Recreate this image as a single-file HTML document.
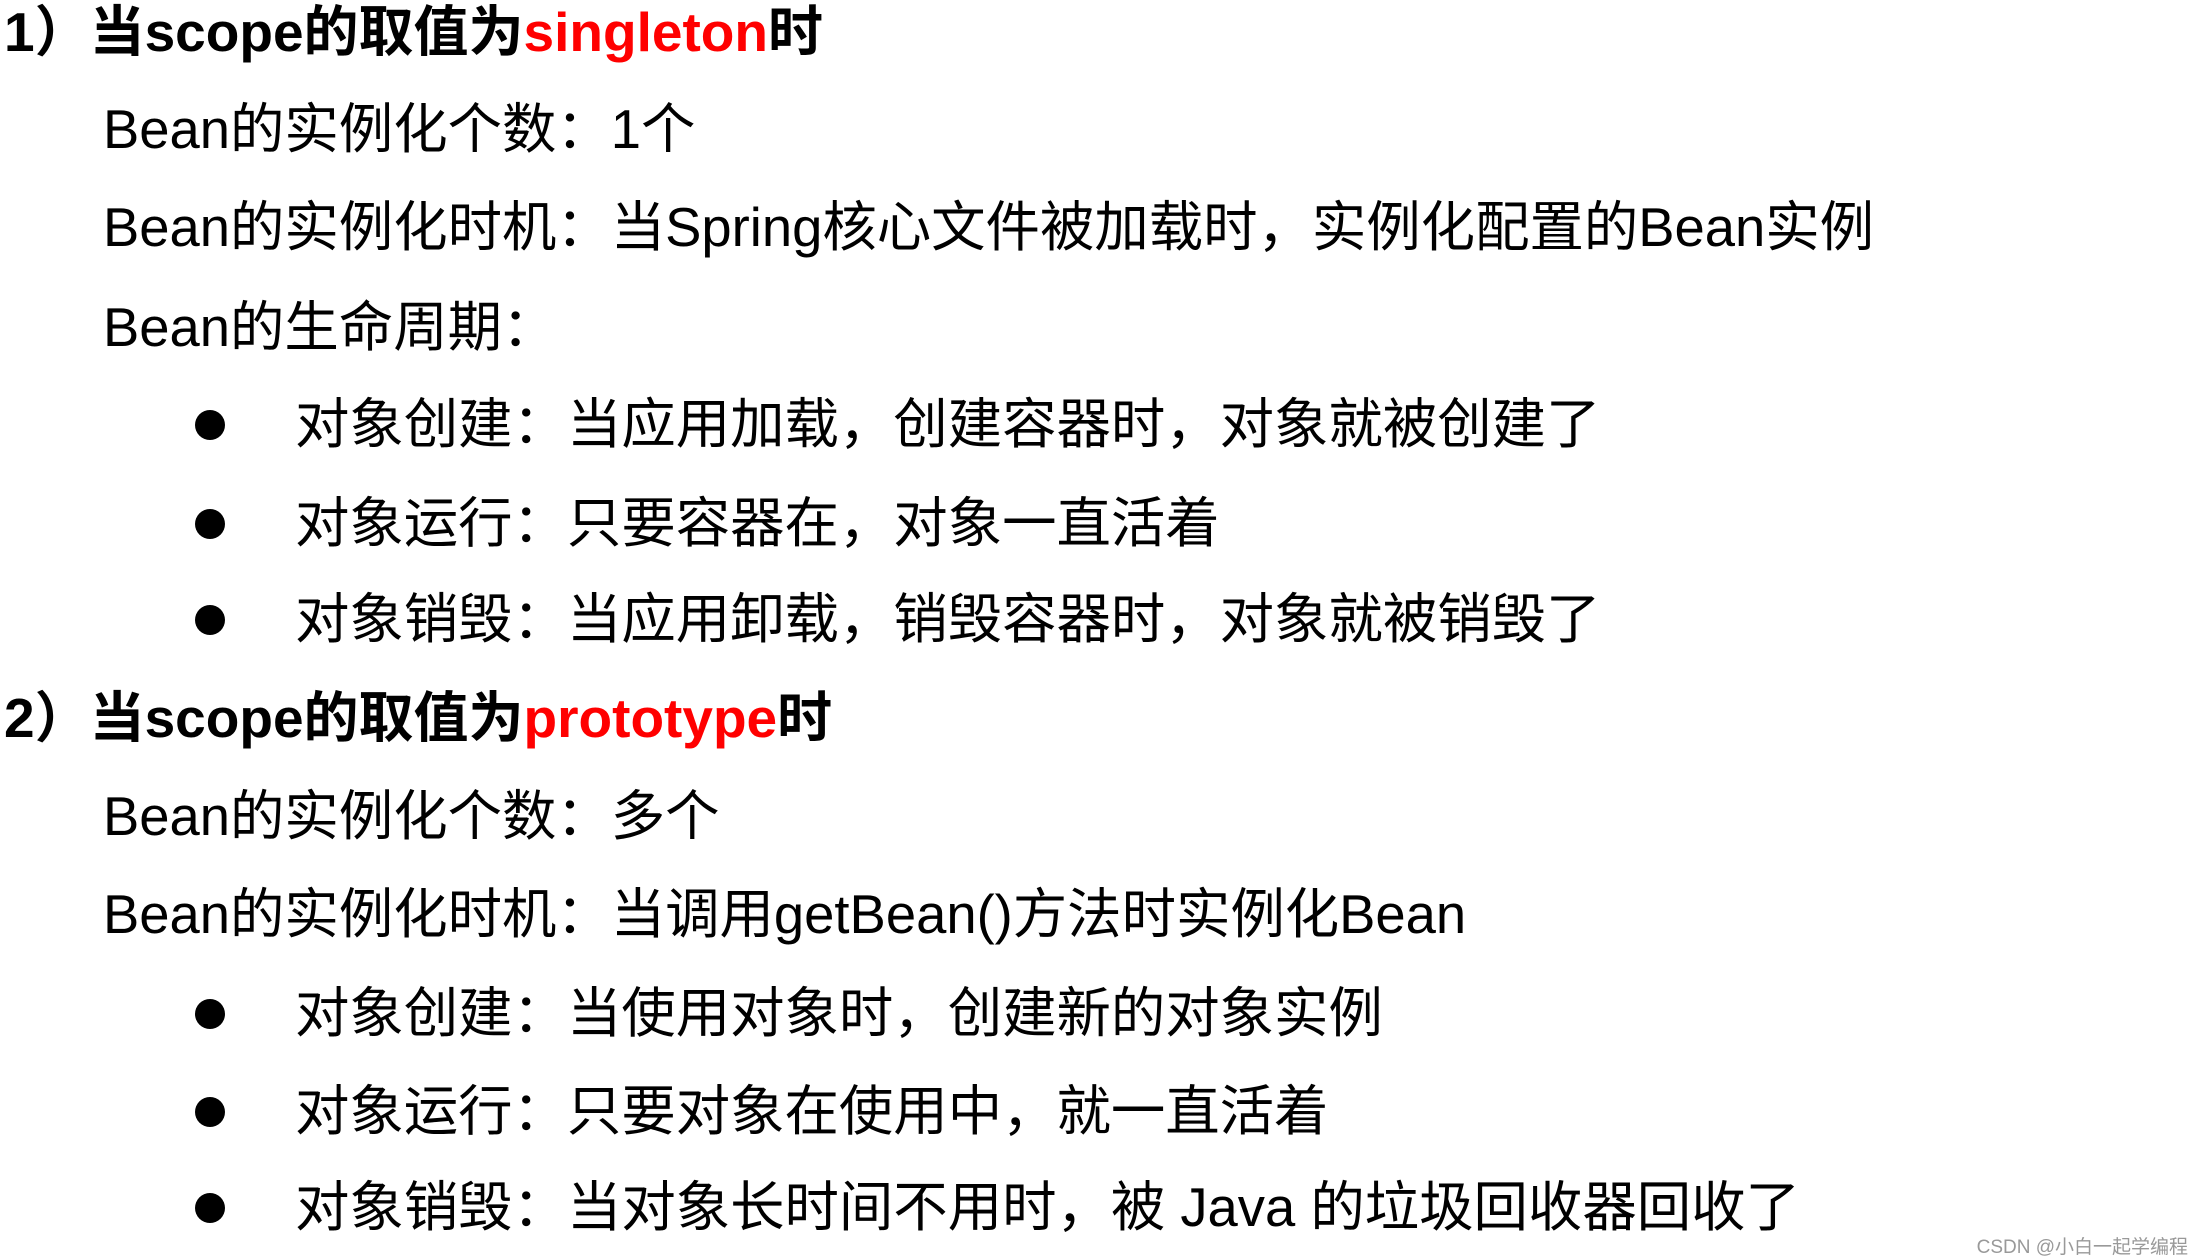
<!DOCTYPE html>
<html><head><meta charset="utf-8"><style>
body{margin:0;width:2196px;height:1256px;background:#fff;position:relative;overflow:hidden;font-family:"Liberation Sans","Noto Sans CJK SC",sans-serif;color:#000}
.l{position:absolute;font-size:54.4px;line-height:60px;white-space:nowrap}
.h{font-weight:bold;left:4px;font-size:55px}
.r{color:#ff0000}
.b{position:absolute;width:30px;height:30px;border-radius:50%;background:#000;left:195px}
.w{position:absolute;right:8px;top:1232px;font-size:19px;color:#999;white-space:nowrap}
</style></head><body>
<div class="l h" style="top:2px">1）当scope的取值为<span class="r">singleton</span>时</div>
<div class="l" style="left:103px;top:100px">Bean的实例化个数：1个</div>
<div class="l" style="left:103px;top:198px">Bean的实例化时机：当Spring核心文件被加载时，实例化配置的Bean实例</div>
<div class="l" style="left:103px;top:298px">Bean的生命周期：</div>
<div class="b" style="top:410px"></div><div class="l" style="left:295px;top:395px">对象创建：当应用加载，创建容器时，对象就被创建了</div>
<div class="b" style="top:509px"></div><div class="l" style="left:295px;top:494px">对象运行：只要容器在，对象一直活着</div>
<div class="b" style="top:605px"></div><div class="l" style="left:295px;top:590px">对象销毁：当应用卸载，销毁容器时，对象就被销毁了</div>
<div class="l h" style="top:688px">2）当scope的取值为<span class="r">prototype</span>时</div>
<div class="l" style="left:103px;top:787px">Bean的实例化个数：多个</div>
<div class="l" style="left:103px;top:885px">Bean的实例化时机：当调用getBean()方法时实例化Bean</div>
<div class="b" style="top:999px"></div><div class="l" style="left:295px;top:984px">对象创建：当使用对象时，创建新的对象实例</div>
<div class="b" style="top:1097px"></div><div class="l" style="left:295px;top:1082px">对象运行：只要对象在使用中，就一直活着</div>
<div class="b" style="top:1193px"></div><div class="l" style="left:295px;top:1178px">对象销毁：当对象长时间不用时，被 Java 的垃圾回收器回收了</div>
<div class="w">CSDN @小白一起学编程</div>
</body></html>
